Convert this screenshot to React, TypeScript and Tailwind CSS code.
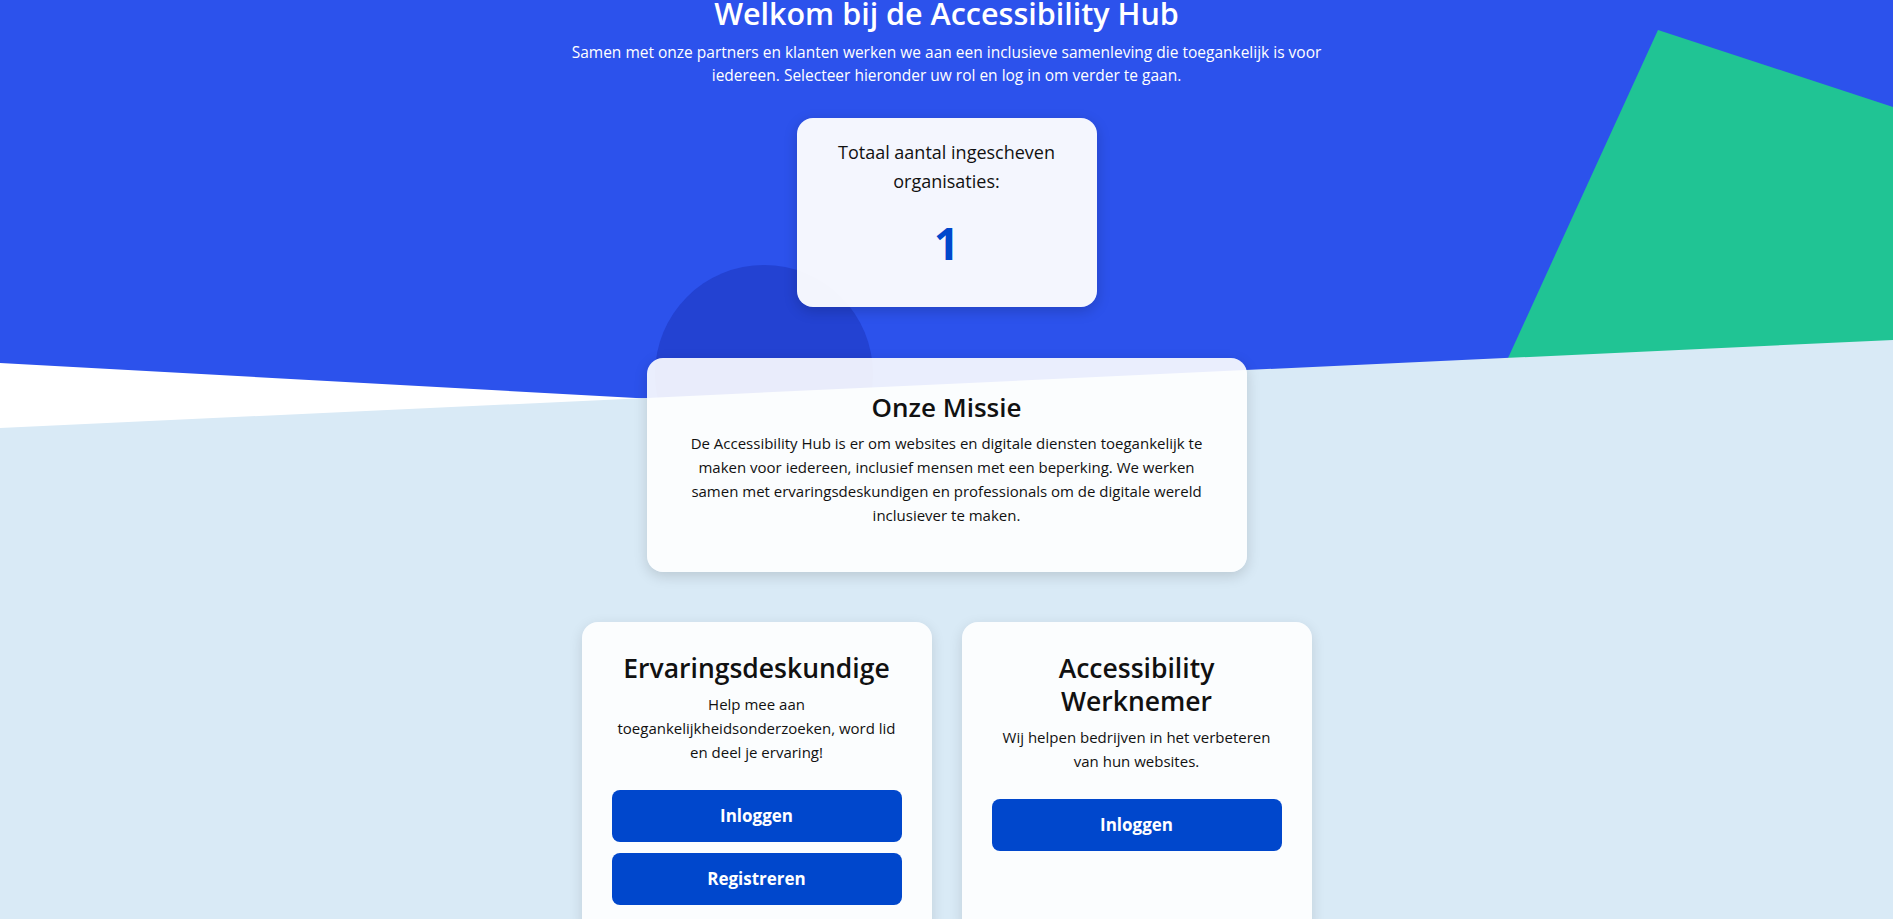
import React from 'react';

/**
 * Accessibility Hub landing
 *
 * Welcome header, organisation counter, mission and role cards.
 */

const FONT = '"Open Sans", "Noto Sans", Arial, sans-serif';

function Background() {
  return (
    <svg
      className="absolute left-0 top-0 h-[450px] w-full"
      viewBox="0 0 1893 450"
      preserveAspectRatio="none"
      aria-hidden="true"
    >
      <rect x="0" y="0" width="1893" height="450" fill="#ffffff" />
      <polygon points="0,0 1893,0 1893,467 0,363" fill="#2c52ec" />
      <polygon points="1658,30 1893,107 1893,450 1466,450" fill="#20c494" />
      <circle cx="764" cy="374" r="109" fill="#2342d2" />
      <polygon points="0,428 1893,340 1893,450 0,450" fill="#d9eaf6" />
    </svg>
  );
}

function RoleCard({
  title,
  text,
  buttons,
}: {
  title: string;
  text: string;
  buttons: string[];
}) {
  return (
    <div className="rounded-2xl bg-white/90 px-[30px] pt-[30px] pb-[30px] text-center shadow-[0_4px_14px_rgba(0,0,0,0.12)]">
      <h2 className="mb-[7px] text-[26.5px] font-semibold leading-[33px] text-[#111]">{title}</h2>
      <p className="text-[15px] leading-6 text-[#111]">{text}</p>
      <div className="mt-[26px] flex flex-col gap-[11px]">
        {buttons.map((label) => (
          <button
            key={label}
            className="h-[52px] w-full rounded-lg bg-[#0047cc] text-[17px] font-bold text-white"
          >
            {label}
          </button>
        ))}
      </div>
    </div>
  );
}

export default function App() {
  return (
    <div className="relative min-h-screen overflow-hidden bg-[#d9eaf6]" style={{ fontFamily: FONT }}>
      <Background />

      <div className="relative flex flex-col items-center">
        {/* Header */}
        <h1 className="text-[30.5px] font-semibold leading-[26px] text-white">
          Welkom bij de Accessibility Hub
        </h1>
        <p className="mt-[15px] max-w-[760px] text-center text-[15.5px] leading-[23px] text-white">
          Samen met onze partners en klanten werken we aan een inclusieve samenleving die toegankelijk is voor
          iedereen. Selecteer hieronder uw rol en log in om verder te gaan.
        </p>

        {/* Counter */}
        <div className="mt-[31px] h-[189px] w-[300px] rounded-2xl bg-white/95 px-5 pt-5 text-center shadow-[0_4px_14px_rgba(0,0,0,0.18)]">
          <p className="text-[18px] leading-[29px] text-[#111]">Totaal aantal ingescheven organisaties:</p>
          <p className="mt-[19px] text-[44px] font-bold leading-[56px] text-[#0047cc]">1</p>
        </div>

        {/* Mission */}
        <div className="mt-[51px] w-[600px] rounded-2xl bg-white/90 px-8 pt-8 pb-[45px] text-center shadow-[0_4px_14px_rgba(0,0,0,0.15)]">
          <h2 className="mb-[7px] text-[26px] font-semibold leading-[34px] text-[#111]">Onze Missie</h2>
          <p className="text-[15px] leading-6 text-[#111]">
            De Accessibility Hub is er om websites en digitale diensten toegankelijk te maken voor iedereen,
            inclusief mensen met een beperking. We werken samen met ervaringsdeskundigen en professionals om de
            digitale wereld inclusiever te maken.
          </p>
        </div>

        {/* Roles */}
        <div className="mt-[50px] grid grid-cols-[350px_350px] gap-[30px] pb-10">
          <RoleCard
            title="Ervaringsdeskundige"
            text="Help mee aan toegankelijkheidsonderzoeken, word lid en deel je ervaring!"
            buttons={['Inloggen', 'Registreren']}
          />
          <RoleCard
            title="Accessibility Werknemer"
            text="Wij helpen bedrijven in het verbeteren van hun websites."
            buttons={['Inloggen']}
          />
        </div>
      </div>
    </div>
  );
}
